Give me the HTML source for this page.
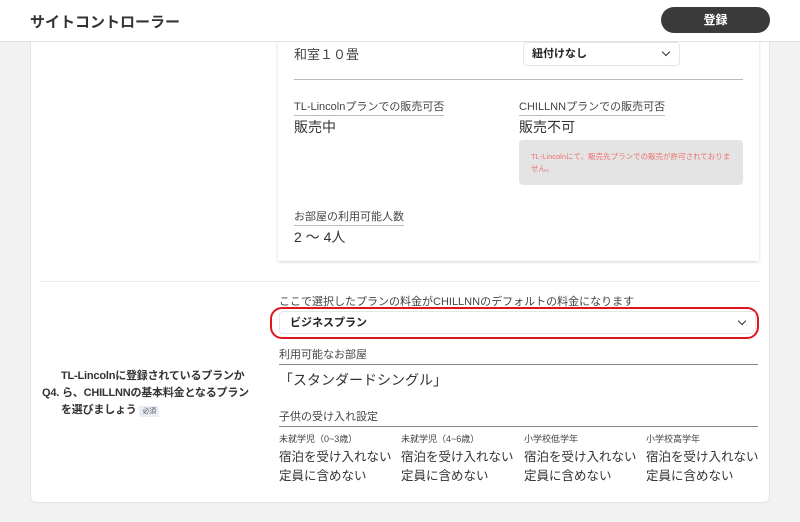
<!DOCTYPE html>
<html><head><meta charset="utf-8"><style>
*{margin:0;padding:0;box-sizing:border-box}
body{width:800px;height:522px;overflow:hidden;background:#f2f2f2;font-family:"Liberation Sans","Noto Sans CJK JP",sans-serif;color:#333;position:relative}
.a{position:absolute;white-space:nowrap}
.hdr{position:absolute;left:0;top:0;width:800px;height:42px;background:#fff;border-bottom:1px solid #e2e2e2}
.card{position:absolute;left:30px;top:30px;width:740px;height:473px;background:#fff;border:1px solid #e4e4e4;border-radius:0 0 6px 6px}
.inner{position:absolute;left:278px;top:30px;width:481px;height:231px;background:#fff;box-shadow:0 1px 3px rgba(0,0,0,.18)}
.lbl{font-size:11px;color:#444;border-bottom:1px solid #bbb;padding-bottom:1px}
.sel{position:absolute;background:#fff;border:1px solid #e6e6e6;border-radius:4px;font-size:11px;font-weight:bold;color:#222;line-height:14px}
.chev{position:absolute;width:6px;height:6px;border-right:1.6px solid #333;border-bottom:1.6px solid #333;transform:rotate(45deg)}
</style></head><body>
<div class="card"></div>
<div class="inner"></div>
<div class="hdr"></div>
<div class="a" style="left:30px;top:11px;font-size:15px;font-weight:bold;color:#333">サイトコントローラー</div>
<div class="a" style="left:661px;top:7px;width:109px;height:26px;background:#3a3a3a;border-radius:13px;color:#fff;font-size:12px;font-weight:bold;text-align:center;line-height:26px">登録</div>
<div class="a" style="left:294px;top:44px;font-size:13px;color:#444">和室１０畳</div>
<div class="sel" style="left:523px;top:42px;width:157px;height:24px;padding:4px 8px">紐付けなし<div class="chev" style="right:10px;top:6px"></div></div>
<div class="a" style="left:294px;top:79px;width:449px;border-top:1px solid #bbb"></div>
<div class="a lbl" style="left:294px;top:98px">TL-Lincolnプランでの販売可否</div>
<div class="a lbl" style="left:519px;top:98px">CHILLNNプランでの販売可否</div>
<div class="a" style="left:294px;top:117px;font-size:14px">販売中</div>
<div class="a" style="left:519px;top:117px;font-size:14px">販売不可</div>
<div class="a" style="left:519px;top:140px;width:224px;height:45px;background:#e4e4e4;border-radius:4px;color:#f07070;font-size:7.5px;padding:11px 12px;white-space:normal;line-height:12px">TL-Lincolnにて、販売先プランでの販売が許可されておりません。</div>
<div class="a lbl" style="left:294px;top:208px">お部屋の利用可能人数</div>
<div class="a" style="left:294px;top:227px;font-size:14px">2 〜 4人</div>
<div class="a" style="left:40px;top:281px;width:720px;border-top:1px solid #eee"></div>
<div class="a" style="left:279px;top:293px;font-size:11px;color:#444">ここで選択したプランの料金がCHILLNNのデフォルトの料金になります</div>
<div class="a" style="left:270px;top:307px;width:489px;height:32px;border:2px solid #e0141e;border-radius:12px"></div>
<div class="sel" style="left:279px;top:311px;width:477px;height:23px;padding:4px 10px">ビジネスプラン<div class="chev" style="right:10px;top:6px"></div></div>
<div class="a" style="left:279px;top:346px;width:479px;font-size:11px;color:#444;border-bottom:1px solid #888;padding-bottom:2px">利用可能なお部屋</div>
<div class="a" style="left:279px;top:370px;font-size:14px">「スタンダードシングル」</div>
<div class="a" style="left:279px;top:408px;width:479px;font-size:11px;color:#444;border-bottom:1px solid #888;padding-bottom:2px">子供の受け入れ設定</div>
<div class="a" style="left:42px;top:368px;font-size:11px;font-weight:bold;line-height:17px;letter-spacing:-0.2px">
<div style="padding-left:19px">TL-Lincolnに登録されているプランか</div>
<div>Q4. ら、CHILLNNの基本料金となるプラン</div>
<div style="padding-left:19px">を選びましょう <span style="font-size:7px;font-weight:normal;background:#e8eef4;color:#556;padding:2px 3px">必須</span></div></div>
<div class="a" style="left:279px;top:432px;font-size:9px;color:#444">未就学児（0~3歳）</div>
<div class="a" style="left:401px;top:432px;font-size:9px;color:#444">未就学児（4~6歳）</div>
<div class="a" style="left:524px;top:432px;font-size:9px;color:#444">小学校低学年</div>
<div class="a" style="left:646px;top:432px;font-size:9px;color:#444">小学校高学年</div>
<div class="a" style="left:279px;top:448px;font-size:12.5px;line-height:19px">宿泊を受け入れない<br>定員に含めない</div>
<div class="a" style="left:401px;top:448px;font-size:12.5px;line-height:19px">宿泊を受け入れない<br>定員に含めない</div>
<div class="a" style="left:524px;top:448px;font-size:12.5px;line-height:19px">宿泊を受け入れない<br>定員に含めない</div>
<div class="a" style="left:646px;top:448px;font-size:12.5px;line-height:19px">宿泊を受け入れない<br>定員に含めない</div>
</body></html>
